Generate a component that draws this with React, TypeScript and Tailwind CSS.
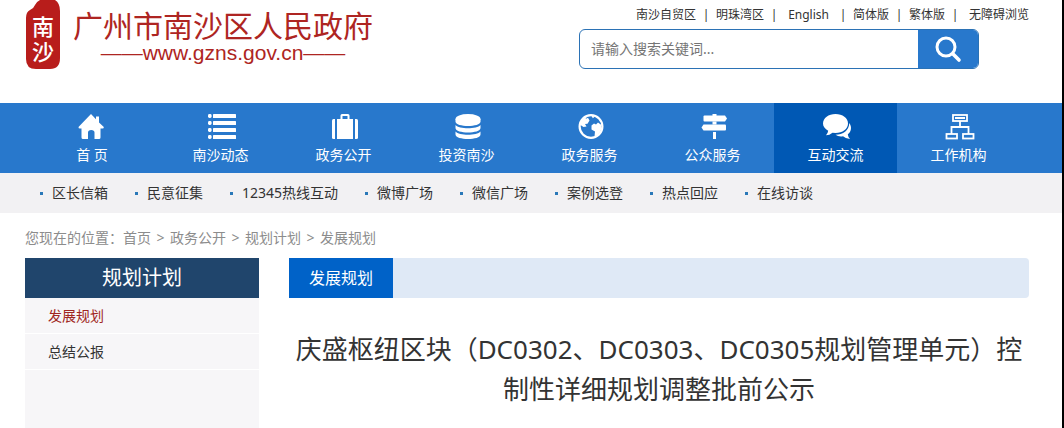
import React, { useState } from 'react';

const topLinks = ['南沙自贸区', '明珠湾区', 'English', '简体版', '繁体版', '无障碍浏览'];

const subLinks = [
  '区长信箱',
  '民意征集',
  '12345热线互动',
  '微博广场',
  '微信广场',
  '案例选登',
  '热点回应',
  '在线访谈',
];

const crumbs = ['首页', '政务公开', '规划计划', '发展规划'];

const navItems = [
  {
    label: '首 页',
    icon: (
      <path d="M13 1 L18 6.2 V3.5 H21 V9.5 L25.8 14 Q26 15.5 24.5 15.5 H22.5 V24.5 Q22.5 26 21 26 H16.5 V19.5 Q16.5 17 13.2 17 Q10 17 10 19.5 V26 H5 Q3.5 26 3.5 24.5 V15.5 H2 Q0.3 15.5 0.5 14 Z" />
    ),
  },
  {
    label: '南沙动态',
    icon: (
      <>
        {[1, 8, 15, 22].map((y) => (
          <g key={y}>
            <rect x="1" y={y} width="3.6" height="4" rx="1.4" />
            <rect x="6" y={y} width="23" height="4" rx="0.6" />
          </g>
        ))}
      </>
    ),
  },
  {
    label: '政务公开',
    icon: (
      <>
        <path d="M5 6 V26 H3.5 Q2 26 2 24.5 V7.5 Q2 6 3.5 6 Z" />
        <path d="M25 6 H26.5 Q28 6 28 7.5 V24.5 Q28 26 26.5 26 H25 Z" />
        <path d="M7 6 H10.5 V2.5 Q10.5 1 12 1 H18 Q19.5 1 19.5 2.5 V6 H23 V26 H7 Z M12.5 3 V6 H17.5 V3 Z" fillRule="evenodd" />
      </>
    ),
  },
  {
    label: '投资南沙',
    icon: (
      <>
        <ellipse cx="15" cy="6" rx="12.5" ry="5" />
        <path d="M2.5 6 H27.5 V8.5 C27.5 14.5 2.5 14.5 2.5 8.5 Z" />
        <path d="M2.5 12 C6 16.3 24 16.3 27.5 12 V15 C27.5 21 2.5 21 2.5 15 Z" />
        <path d="M2.5 18.5 C6 22.8 24 22.8 27.5 18.5 V21.5 C27.5 27.5 2.5 27.5 2.5 21.5 Z" />
      </>
    ),
  },
  {
    label: '政务服务',
    icon: (
      <>
        <circle cx="15" cy="13.5" r="11.4" fill="none" stroke="currentColor" strokeWidth="2.2" />
        <path d="M4.5 9 L8 4.5 L11 3.5 L9.5 6 L12 4.8 L13.5 7.5 L11.5 10.8 L9 11 L10.5 13.5 L7.5 14 L4.5 12 Z" />
        <path d="M15.5 2.8 L19 3.5 L16.8 5.2 Z" />
        <path d="M15.5 12.5 L18 10.5 L20 11.5 L22 9.5 L25.5 12 L25 17 L22 22 L18.5 23.5 L19 18.5 L15.5 16.5 Z" />
      </>
    ),
  },
  {
    label: '公众服务',
    icon: (
      <>
        <rect x="13.5" y="1" width="4" height="2" />
        <path d="M5.5 2.5 H26 L28 5.5 L26 8.5 H5.5 Q4.5 8.5 4.5 7.5 V3.5 Q4.5 2.5 5.5 2.5 Z" />
        <rect x="13.5" y="8.5" width="4" height="3" />
        <path d="M4.5 11.5 H26 Q27 11.5 27 12.5 V16.5 Q27 17.5 26 17.5 H4.5 L2.5 14.5 Z" />
        <rect x="14" y="19" width="3" height="7" />
      </>
    ),
  },
  {
    label: '互动交流',
    icon: (
      <>
        <path d="M13.5 1 C20.5 1 26 5 26 10.5 C26 16 20.5 20 13.5 20 L10.5 19.7 Q7.5 22.2 4 22.2 Q6 20 6.2 17.8 C3 16 1 13.5 1 10.5 C1 5 6.5 1 13.5 1 Z" />
        <path d="M27.3 10 C30 14 29.5 18.5 25.8 21.3 Q26 24 28 26 Q24 26 21 23.3 Q16.5 24 13.5 21.8 C21 21.8 27 17.5 27.3 10 Z" />
      </>
    ),
  },
  {
    label: '工作机构',
    icon: (
      <g fill="none" stroke="currentColor" strokeWidth="1.8">
        <rect x="8" y="2" width="14" height="6" />
        <path d="M10 5 H20 M15 8 V14 M6.5 21 V14 H23.5 V21" />
        <rect x="1.5" y="21" width="10.5" height="4.5" />
        <rect x="18" y="21" width="10.5" height="4.5" />
      </g>
    ),
  },
];

function Logo() {
  return (
    <a href="#" className="flex text-[#ae2522]">
      <svg width="36" height="70" viewBox="0 0 36 70" aria-hidden="true">
        <path
          d="M15 0 H30 Q35 3 35 11 V58 Q35 69 25 69 H11 Q1 69 1 59 V18 Q1 12 5 10 Q9 8 10 5 Q11 2 15 0 Z"
          fill="#b81d1b"
        />
        <g fill="#fff" fontSize="22" fontWeight="500" fontFamily="'Noto Sans CJK SC', sans-serif" textAnchor="middle">
          <text x="18" y="35">南</text>
          <text x="18" y="60">沙</text>
        </g>
      </svg>
      <div className="ml-3 flex flex-col items-center pt-2">
        <span className="text-[30px] leading-9">广州市南沙区人民政府</span>
        <span className="font-['Liberation_Sans',sans-serif] text-[21px] leading-[18px]">——www.gzns.gov.cn——</span>
      </div>
    </a>
  );
}

function SearchBox() {
  return (
    <form className="mr-[50px] flex h-10 w-[400px] overflow-hidden rounded-md border border-[#2b72b5]">
      <input
        type="text"
        aria-label="搜索"
        placeholder="请输入搜索关键词..."
        className="min-w-0 flex-1 px-[11px] text-sm outline-none placeholder:text-[#757575]"
      />
      <button type="button" aria-label="搜索" className="flex w-[60px] items-center justify-center bg-[#2878cc] text-white">
        <svg width="28" height="28" viewBox="0 0 28 28" fill="none" stroke="currentColor" strokeLinecap="round">
          <circle cx="12" cy="12" r="9" strokeWidth="3" />
          <path d="M19 19 L25 25" strokeWidth="3.6" />
        </svg>
      </button>
    </form>
  );
}

function App() {
  const [active, setActive] = useState('互动交流');

  return (
    <div className="min-h-screen border-r-2 border-black bg-white font-['Noto_Sans','Noto_Sans_CJK_SC',sans-serif] text-sm text-[#333]">
      <header className="flex h-[103px] justify-between pr-[33px] pl-[25px]">
        <Logo />
        <div className="flex flex-col items-end pt-[7px]">
          <div className="mb-1.5 flex text-xs leading-4">
            {topLinks.map((link, index) => (
              <React.Fragment key={link}>
                {index > 0 && <span className="w-5 text-center">|</span>}
                <a href="#" className={link === 'English' ? 'px-1' : index === 5 ? 'pl-1' : ''}>
                  {link}
                </a>
              </React.Fragment>
            ))}
          </div>
          <SearchBox />
        </div>
      </header>

      <nav className="flex h-[70px] bg-[#2878cc] pl-[25px]">
        {navItems.map((item, index) => (
          <a
            key={item.label}
            href="#"
            onClick={() => setActive(item.label)}
            className={`flex flex-col items-center pt-2.5 text-white ${index === 0 ? 'w-[134px]' : 'w-[123px]'} ${
              item.label === active ? 'bg-[#0058b4]' : ''
            }`}
          >
            <svg width="30" height="27" viewBox="-1 0 30 27" overflow="visible" fill="currentColor" aria-hidden="true">
              {item.icon}
            </svg>
            <span className="mt-[5px] leading-5">{item.label}</span>
          </a>
        ))}
      </nav>

      <div className="flex h-10 items-center gap-[27px] bg-[#f2f1f3] pl-10">
        {subLinks.map((link) => (
          <a key={link} href="#" className="flex items-center gap-[9px]">
            <span className="size-[3px] bg-[#2a78b8]" />
            {link}
          </a>
        ))}
      </div>

      <div className="pr-[33px] pl-[25px]">
        <div className="flex pt-[15px] pb-2.5 leading-5 text-[#8c8c8c]">
          <span>您现在的位置：</span>
          {crumbs.map((crumb, index) => (
            <React.Fragment key={crumb}>
              {index > 0 && <span className="w-[19px] text-center">&gt;</span>}
              <a href="#">{crumb}</a>
            </React.Fragment>
          ))}
        </div>

        <div className="flex gap-[30px]">
          <aside className="min-h-[170px] w-[234px] shrink-0 bg-[#f7f6f8]">
            <h2 className="bg-[#20456c] text-center text-xl leading-10 text-white">规划计划</h2>
            <ul className="leading-[35px]">
              <li className="border-b border-white pl-[23px] text-[#a02622]">
                <a href="#">发展规划</a>
              </li>
              <li className="border-b border-white pl-[23px]">
                <a href="#">总结公报</a>
              </li>
            </ul>
          </aside>

          <main className="min-w-0 flex-1">
            <div className="flex rounded-sm bg-[#dfe9f6]">
              <h3 className="w-[104px] bg-[#0062c8] text-center text-base leading-10 text-white">发展规划</h3>
            </div>
            <h1 className="mt-[31px] text-center text-[26px] leading-10">
              庆盛枢纽区块（DC0302、DC0303、DC0305规划管理单元）控制性详细规划调整批前公示
            </h1>
          </main>
        </div>
      </div>
    </div>
  );
}

export default App;
